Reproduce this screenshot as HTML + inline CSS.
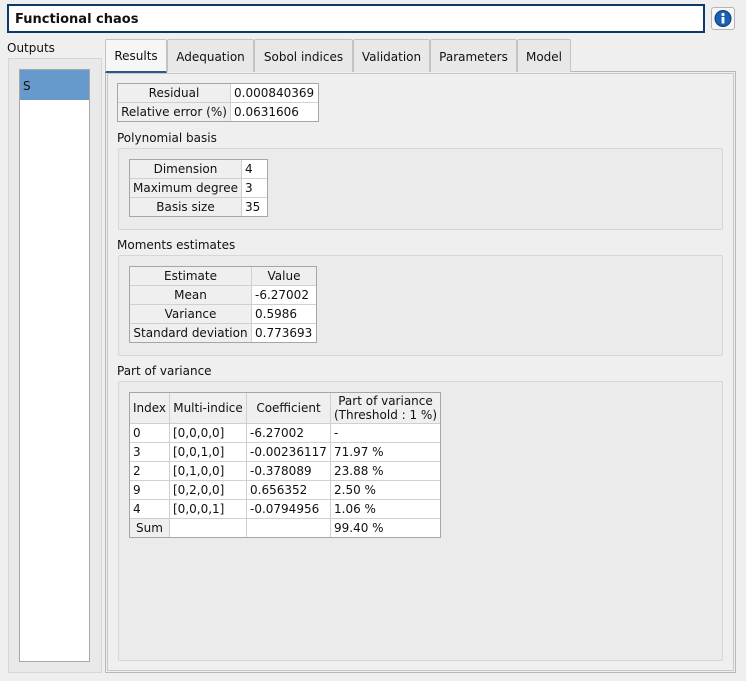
<!DOCTYPE html>
<html><head><meta charset="utf-8"><style>
*{box-sizing:border-box;margin:0;padding:0}
body{width:746px;height:681px;background:#efefef;font-family:"DejaVu Sans","Liberation Sans",sans-serif;font-size:12px;color:#111;position:relative;overflow:hidden}
.a{position:absolute}
.title{left:7px;top:4px;width:698px;height:29px;border:2px solid #0d3966;background:#fff;font-weight:bold;font-size:13px;line-height:27px;padding-left:6px}
.info{left:711px;top:7px;width:24px;height:23px;border:1px solid #b5b5b5;border-radius:3px;background:#f6f6f6}
.tab{top:39px;height:33px;border:1px solid #c3c3c3;border-bottom:none;background:#e8e8e8;text-align:center;line-height:34px;border-radius:2px 2px 0 0}
.g{position:absolute;display:grid;gap:1px;background:#d0d0d0;border:1px solid #a6a6a6;grid-auto-rows:18px}
.g div{background:#fff;line-height:17px;padding-top:1px;padding-left:3px;white-space:nowrap;overflow:hidden}
.g .h{background:#efefef;text-align:center;padding-left:0}
.box{border:1px solid #d6d6d6;background:#ebebeb;border-radius:2px}
.lbl{line-height:15px}
</style></head><body>
<div class="a title">Functional chaos</div>
<div class="a info"><svg width="22" height="21" viewBox="0 0 22 21"><circle cx="11" cy="10.5" r="8" fill="#1a5fb4"/><circle cx="11" cy="10.5" r="8" fill="none" stroke="#0b3d7a" stroke-width="1"/><circle cx="11" cy="6.5" r="1.6" fill="#fff"/><rect x="9.6" y="9" width="2.8" height="6.5" fill="#fff"/></svg></div>
<div class="a lbl" style="left:7px;top:41px">Outputs</div>
<div class="a" style="left:8px;top:58px;width:94px;height:615px;border:1px solid #d6d6d6;background:#e9e9e9"></div>
<div class="a" style="left:19px;top:69px;width:71px;height:593px;border:1px solid #a8a8a8;background:#fff"></div>
<div class="a" style="left:20px;top:70px;width:69px;height:30px;background:#6699cc;padding-left:3px;line-height:32px">S</div>
<div class="a" style="left:105px;top:71px;width:631px;height:602px;border:1px solid #b8b8b8;background:#efefef"></div>
<div class="a" style="left:107px;top:73px;width:627px;height:598px;border:1px solid #c8c8c8;background:#efefef"></div>
<div class="a tab" style="left:167px;width:87px">Adequation</div>
<div class="a tab" style="left:254px;width:99px">Sobol indices</div>
<div class="a tab" style="left:353px;width:77px">Validation</div>
<div class="a tab" style="left:430px;width:87px">Parameters</div>
<div class="a tab" style="left:517px;width:54px">Model</div>
<div class="a tab" style="left:105px;width:62px;background:#f6f6f6;height:34px;border-bottom:2px solid #2a5a8a;line-height:32px">Results</div>

<div class="g" style="left:117px;top:83px;grid-template-columns:112px 87px">
<div class="h">Residual</div><div>0.000840369</div>
<div class="h">Relative error (%)</div><div>0.0631606</div></div>

<div class="a lbl" style="left:117px;top:131px">Polynomial basis</div>
<div class="a box" style="left:118px;top:148px;width:605px;height:82px"></div>
<div class="g" style="left:129px;top:159px;grid-template-columns:111px 25px">
<div class="h">Dimension</div><div>4</div>
<div class="h">Maximum degree</div><div>3</div>
<div class="h">Basis size</div><div>35</div></div>

<div class="a lbl" style="left:117px;top:238px">Moments estimates</div>
<div class="a box" style="left:118px;top:255px;width:605px;height:101px"></div>
<div class="g" style="left:129px;top:266px;grid-template-columns:121px 64px">
<div class="h">Estimate</div><div class="h">Value</div>
<div class="h">Mean</div><div>-6.27002</div>
<div class="h">Variance</div><div>0.5986</div>
<div class="h">Standard deviation</div><div>0.773693</div></div>

<div class="a lbl" style="left:117px;top:364px">Part of variance</div>
<div class="a box" style="left:118px;top:381px;width:605px;height:280px"></div>
<div class="g" style="left:129px;top:392px;grid-template-columns:39px 76px 83px 109px;grid-template-rows:30px">
<div class="h" style="line-height:30px;padding-top:0">Index</div><div class="h" style="line-height:30px;padding-top:0">Multi-indice</div><div class="h" style="line-height:30px;padding-top:0">Coefficient</div><div class="h" style="line-height:14px;padding-top:1px">Part of variance<br>(Threshold : 1 %)</div>
<div>0</div><div>[0,0,0,0]</div><div>-6.27002</div><div>-</div>
<div>3</div><div>[0,0,1,0]</div><div>-0.00236117</div><div>71.97 %</div>
<div>2</div><div>[0,1,0,0]</div><div>-0.378089</div><div>23.88 %</div>
<div>9</div><div>[0,2,0,0]</div><div>0.656352</div><div>2.50 %</div>
<div>4</div><div>[0,0,0,1]</div><div>-0.0794956</div><div>1.06 %</div>
<div class="h">Sum</div><div></div><div></div><div>99.40 %</div></div>
</body></html>
